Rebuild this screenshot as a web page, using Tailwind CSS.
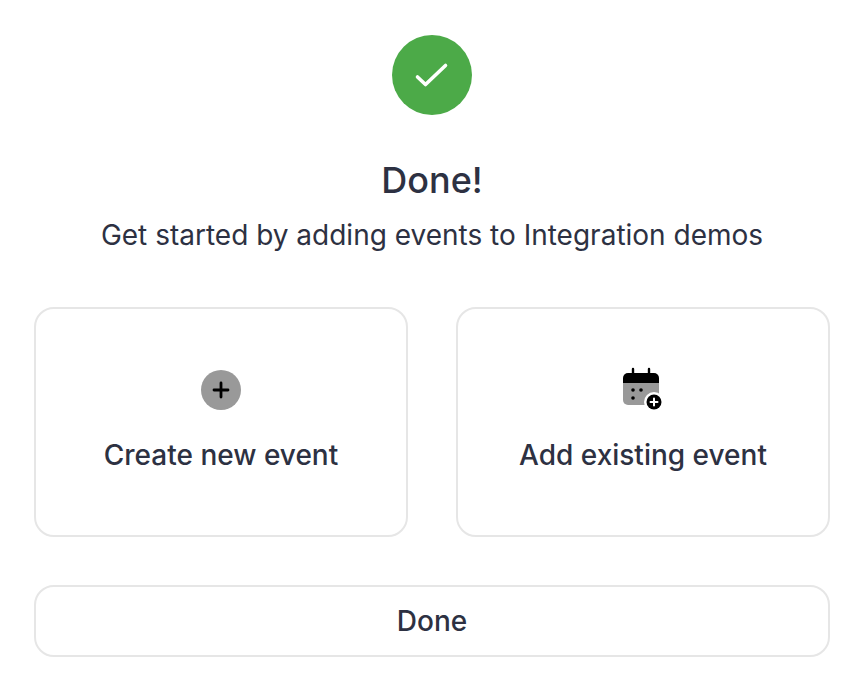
<!doctype html>
<html lang="en">
  <head>
    <meta charset="UTF-8" />
    <title>Done</title>
    <script src="https://cdn.jsdelivr.net/npm/@tailwindcss/browser@4"></script>
  </head>
  <body class="bg-white">
    <div class="flex flex-col items-center w-[868px] h-[690px] pl-[34px] pr-[38px] pt-[35px] font-['Inter','Liberation_Sans',sans-serif] text-[#2d3142]">
      <div class="flex items-center justify-center w-20 h-20 rounded-full bg-[#4caa48]">
        <svg width="80" height="80" viewBox="0 0 80 80" fill="none">
          <path d="M25.5 42L33.5 49.5L53.5 30.5" stroke="white" stroke-width="3.6" stroke-linecap="round" stroke-linejoin="round" />
        </svg>
      </div>
      <h1 class="mt-[44px] text-[36px] leading-[42px] font-medium">Done!</h1>
      <p class="mt-[18px] text-[28px] leading-[32px]">Get started by adding events to Integration demos</p>
      <div class="flex gap-12 w-full mt-[56px]">
        <button class="flex flex-col items-center flex-1 h-[230px] pt-[60px] border-2 border-[#e6e6e6] rounded-[20px] bg-white">
          <svg class="mt-px" width="40" height="40" viewBox="0 0 40 40">
            <circle cx="20" cy="20" r="20" fill="#999999" />
            <path d="M20 13V27M13 20H27" stroke="black" stroke-width="2.8" stroke-linecap="round" />
          </svg>
          <span class="mt-[28px] text-[28px] leading-[34px] font-medium">Create new event</span>
        </button>
        <button class="flex flex-col items-center flex-1 h-[230px] pt-[58px] border-2 border-[#e6e6e6] rounded-[20px] bg-white">
          <svg class="-translate-x-px" width="44" height="44" viewBox="0 0 44 44">
            <path d="M3 11a5 5 0 0 1 5-5h26a5 5 0 0 1 5 5v5H3z" fill="black" />
            <path d="M3 16h36v22H8a5 5 0 0 1-5-5z" fill="#999999" />
            <path d="M13 2v6M29 2v6" stroke="black" stroke-width="2.4" stroke-linecap="round" />
            <circle cx="13" cy="23" r="1.8" fill="black" />
            <circle cx="21" cy="23" r="1.8" fill="black" />
            <circle cx="13" cy="31" r="1.8" fill="black" />
            <circle cx="34" cy="35" r="10" fill="white" />
            <circle cx="34" cy="35" r="7.5" fill="black" />
            <path d="M34 31.5V38.5M30.5 35H37.5" stroke="white" stroke-width="2" stroke-linecap="round" />
          </svg>
          <span class="mt-[27px] text-[28px] leading-[34px] font-medium">Add existing event</span>
        </button>
      </div>
      <button class="w-full h-[72px] mt-[48px] border-2 border-[#e6e6e6] rounded-[20px] bg-white text-[28px] font-medium">Done</button>
    </div>
  </body>
</html>
